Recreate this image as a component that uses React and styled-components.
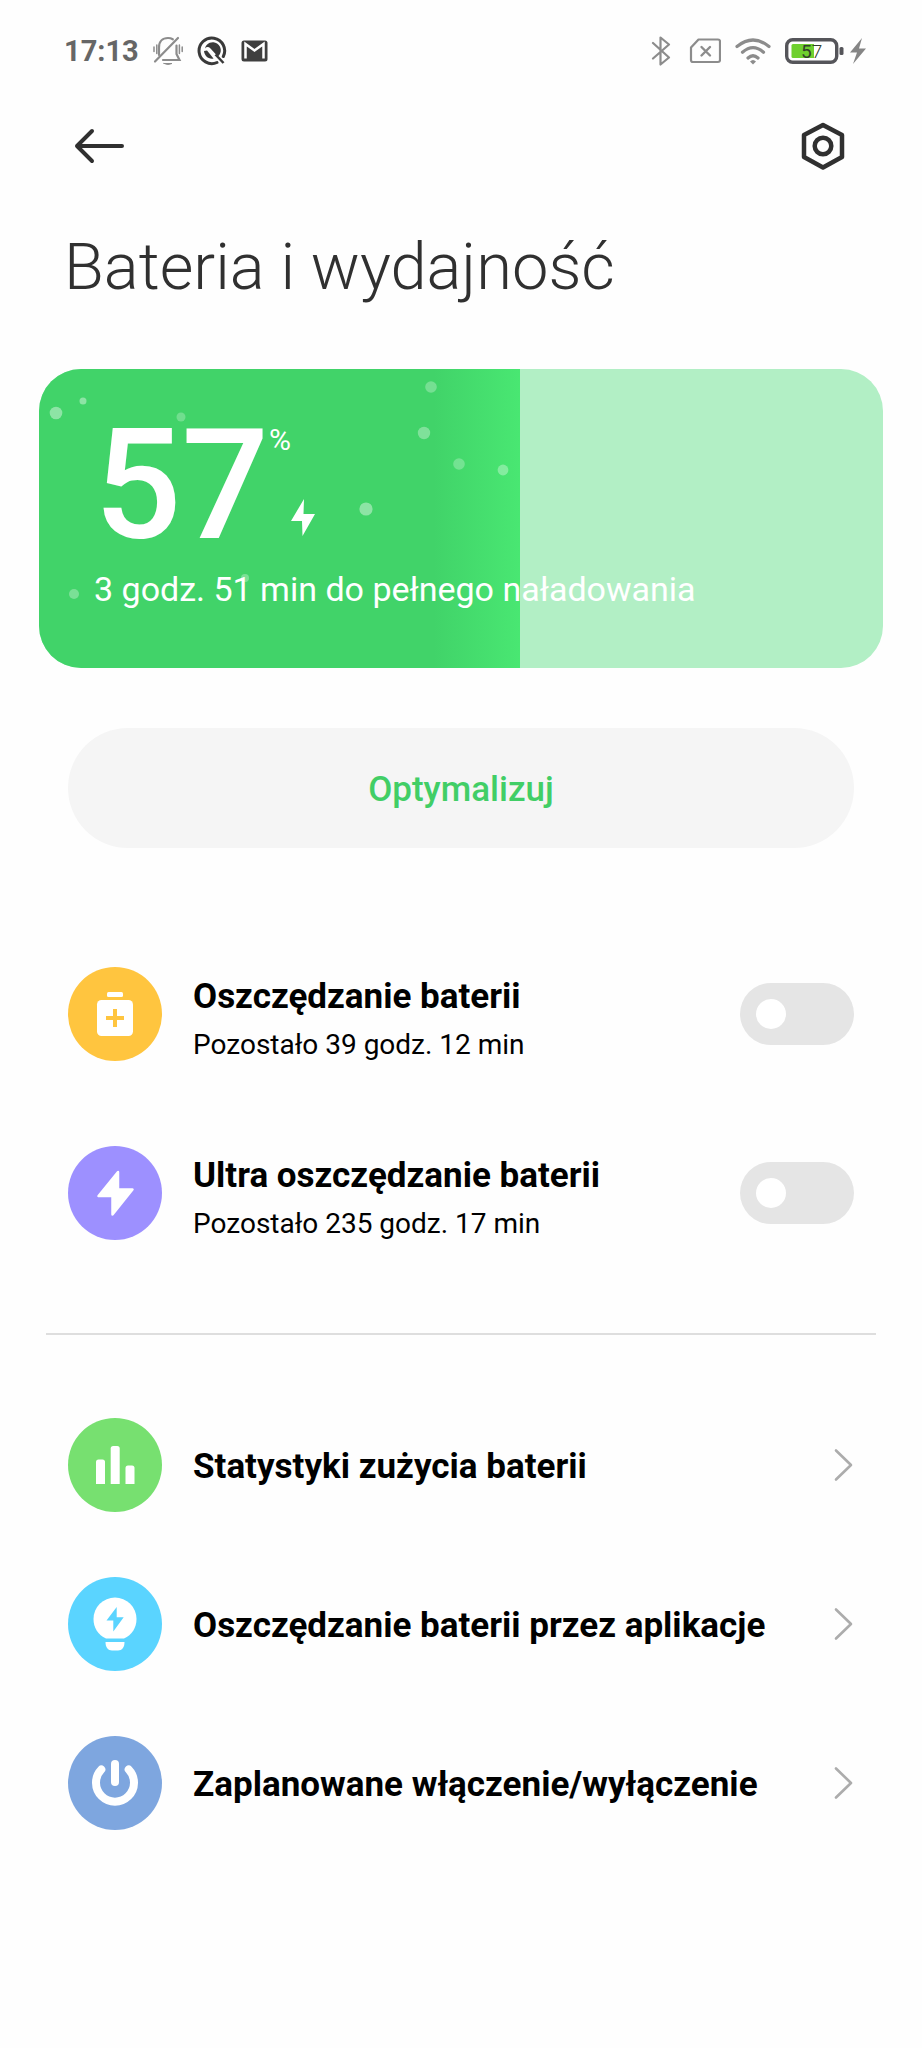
import React from 'react'
import styled, { createGlobalStyle } from 'styled-components'

const switches = [
    { id: 'saver', title: 'Oszczędzanie baterii', note: 'Pozostało 39 godz. 12 min', color: '#ffc53f', icon: <SaverIcon /> },
    { id: 'ultra', title: 'Ultra oszczędzanie baterii', note: 'Pozostało 235 godz. 17 min', color: '#9d90ff', icon: <UltraIcon /> },
]

const links = [
    { id: 'stats', title: 'Statystyki zużycia baterii', color: '#77e070', icon: <StatsIcon /> },
    { id: 'apps', title: 'Oszczędzanie baterii przez aplikacje', color: '#5ad4ff', icon: <BulbIcon /> },
    { id: 'schedule', title: 'Zaplanowane włączenie/wyłączenie', color: '#7ea6df', icon: <PowerIcon /> },
]

// x, y, radius, opacity
const bubbles = [
    [17, 44, 6.3, 0.4],
    [44, 32, 3.5, 0.4],
    [142, 48, 4.5, 0.25],
    [392, 18, 5.8, 0.28],
    [385, 64, 6.2, 0.33],
    [327, 140, 6.6, 0.4],
    [420, 95, 5.8, 0.26],
    [464, 101, 5.4, 0.33],
    [35, 225, 5, 0.3],
    [206, 209, 4, 0.3],
]

function App() {
    return (
        <Page>
            <GlobalStyle />
            <StatusBar>
                <StatusGroup>
                    <Clock>17:13</Clock>
                    <MutedIcon />
                    <SearchIcon />
                    <MailIcon />
                </StatusGroup>
                <StatusGroup>
                    <BluetoothIcon />
                    <SimIcon />
                    <WifiIcon />
                    <BatteryIcon />
                </StatusGroup>
            </StatusBar>
            <Header>
                <IconButton aria-label="Wstecz">
                    <svg width="50" height="36" viewBox="0 0 50 36" fill="none" stroke="#303030" strokeWidth="4" strokeLinecap="round" strokeLinejoin="round">
                        <path d="M48 18H3M18 3L3 18L18 33" />
                    </svg>
                </IconButton>
                <IconButton aria-label="Ustawienia">
                    <svg width="44" height="48" viewBox="0 0 44 48" fill="none" stroke="#303030" strokeWidth="4.500" strokeLinejoin="round">
                        <path d="M22 3L41 13V35L22 45.500L3 35V13Z" />
                        <circle cx="22" cy="24" r="8.300" />
                    </svg>
                </IconButton>
            </Header>
            <Title>Bateria i wydajność</Title>

            <Card>
                <Fill>
                    <svg width="481" height="299" viewBox="0 0 481 299">
                        {bubbles.map(([x, y, r, o]) => (
                            <circle key={`${x}-${y}`} cx={x} cy={y} r={r} fill="#fff" opacity={o} />
                        ))}
                    </svg>
                </Fill>
                <Level>
                    <Amount>57</Amount>
                    <Unit>%</Unit>
                    <Charging>
                        <svg width="24" height="38" viewBox="0 0 24 38">
                            <path d="M13 0L0 22H11L11.500 37L24 15H12.500Z" fill="#fff" />
                        </svg>
                    </Charging>
                </Level>
                <Remaining>3 godz. 51 min do pełnego naładowania</Remaining>
            </Card>

            <Optimize>Optymalizuj</Optimize>

            <SwitchList>
                {switches.map(s => (
                    <SwitchRow key={s.id} htmlFor={s.id}>
                        <Badge $color={s.color}>{s.icon}</Badge>
                        <Texts>
                            <RowTitle>{s.title}</RowTitle>
                            <Note>{s.note}</Note>
                        </Texts>
                        <Toggle id={s.id} type="checkbox" />
                    </SwitchRow>
                ))}
            </SwitchList>

            <Divider />

            <nav>
                {links.map(l => (
                    <LinkRow key={l.id} href={`#${l.id}`}>
                        <Badge $color={l.color}>{l.icon}</Badge>
                        <Texts>
                            <RowTitle>{l.title}</RowTitle>
                        </Texts>
                        <svg width="20" height="34" viewBox="0 0 20 34" fill="none" stroke="#acacac" strokeWidth="2.600" strokeLinecap="round" strokeLinejoin="round">
                            <path d="M2 2.500L17 17L2 31.500" />
                        </svg>
                    </LinkRow>
                ))}
            </nav>
        </Page>
    )
}

export default App

// status bar icons
function MutedIcon() {
    return (
        <svg width="30" height="30" viewBox="0 0 30 30" fill="none" stroke="#8c8c8c" strokeWidth="2.200" strokeLinecap="round">
            <path d="M6 19V11.500C6 5.500 9.500 2 15 2C17 2 18.500 2.500 19.800 3.300M23.500 9.500V18L26.500 24H10" />
            <path d="M2 25.500L25 2" />
            <path d="M11 27.500H19Q15 29.500 11 27.500Z" fill="#8c8c8c" strokeWidth="1" />
            <path d="M1 11V15.500M3.800 9V17.500M26.400 9V17.500M29.200 11V15.500" strokeWidth="1.500" />
        </svg>
    )
}

function SearchIcon() {
    return (
        <svg width="30" height="30" viewBox="0 0 30 30" fill="none">
            <path d="M20 26.500A12.800 12.800 0 1 1 26.300 20.500" stroke="#3a3a3a" strokeWidth="3" strokeLinecap="round" />
            <path d="M8 12.500A8 8 0 1 1 20.800 20.500L13.500 12.500C11.500 10.500 9.500 10.700 8 12.500Z" fill="#3a3a3a" />
            <path d="M7 15L10 14.500L16.500 22.500C11.500 23.500 7.500 20 7 15Z" fill="#3a3a3a" />
            <path d="M18.500 18.500L26.500 27" stroke="#3a3a3a" strokeWidth="2.500" />
        </svg>
    )
}

function MailIcon() {
    return (
        <svg width="27" height="22" viewBox="0 0 27 22" fill="none">
            <rect x="0.500" y="0.500" width="26" height="21" rx="2.500" fill="#3f3f3f" />
            <path d="M4.500 18.500V4L13.500 10.500L22.500 4V18.500" stroke="#fff" strokeWidth="2.500" />
        </svg>
    )
}

function BluetoothIcon() {
    return (
        <svg width="24" height="30" viewBox="0 0 24 30" fill="none" stroke="#8c8c8c" strokeWidth="2.200" strokeLinejoin="round" strokeLinecap="round">
            <path d="M2 7L18 21.500L9.500 28.500V1.500L18 8.500L2 22.500" />
        </svg>
    )
}

function SimIcon() {
    return (
        <svg width="32" height="26" viewBox="0 0 32 26" fill="none" stroke="#8c8c8c" strokeWidth="2.200" strokeLinejoin="round" strokeLinecap="round">
            <path d="M9.500 1.500H29Q31 1.500 31 3.500V22Q31 24 29 24H4Q2 24 2 22V9.500Z" />
            <path d="M12.500 9L21 17.500M21 9L12.500 17.500" strokeWidth="2.400" />
        </svg>
    )
}

function WifiIcon() {
    return (
        <svg width="36" height="27" viewBox="0 0 36 27" fill="none" stroke="#8c8c8c" strokeWidth="3.200" strokeLinecap="round">
            <path d="M2 8.500Q18 -4.500 34 8.500M7.500 14.300Q18 5 28.500 14.300M13 20Q18 15.500 23 20" />
            <path d="M15 23.500Q18 20.500 21 23.500L18 26.500Z" fill="#8c8c8c" stroke="none" />
        </svg>
    )
}

function BatteryIcon() {
    return (
        <svg width="82" height="28" viewBox="0 0 82 28">
            <rect x="1.700" y="2.700" width="50" height="22.600" rx="6" fill="#fff" stroke="#55555a" strokeWidth="3.400" />
            <path d="M8 7H29V21H8Q6.500 21 6.500 19.500V8.500Q6.500 7 8 7Z" fill="#6fd02f" />
            <BatteryText x="16" y="21">5<tspan fontWeight="300">7</tspan></BatteryText>
            <rect x="54.500" y="10" width="4" height="8" rx="1.500" fill="#55555a" />
            <path d="M77 1L65 15.500H72L68 27L81 11.500H74Z" fill="#858585" />
        </svg>
    )
}

// list icons
function SaverIcon() {
    return (
        <svg width="94" height="94" viewBox="0 0 94 94">
            <rect x="39" y="25" width="16" height="5" rx="1.500" fill="#fff" />
            <rect x="29" y="33" width="36" height="36" rx="4.500" fill="#fff" />
            <path d="M47 42V60M38 51H56" stroke="#ffc53f" strokeWidth="4" />
        </svg>
    )
}

function UltraIcon() {
    return (
        <svg width="94" height="94" viewBox="0 0 94 94">
            <path d="M50 26L30.500 50H44.500V68.500L64.500 43.500H50Z" fill="#fff" stroke="#fff" strokeWidth="2.500" strokeLinejoin="round" />
        </svg>
    )
}

function StatsIcon() {
    return (
        <svg width="94" height="94" viewBox="0 0 94 94" fill="#fff">
            <path d="M28 66V44Q28 41.500 30.500 41.500H34.500Q37 41.500 37 44V66Z" />
            <path d="M42.700 66V30.500Q42.700 28 45.200 28H49.200Q51.700 28 51.700 30.500V66Z" />
            <path d="M57.500 66V50Q57.500 47.500 60 47.500H64Q66.500 47.500 66.500 50V66Z" />
        </svg>
    )
}

function BulbIcon() {
    return (
        <svg width="94" height="94" viewBox="0 0 94 94" fill="#fff">
            <path d="M38 61.500C30 58 25.500 50.500 25.500 42A21.500 21.500 0 0 1 68.500 42C68.500 50.500 64 58 56 61.500Z" />
            <path d="M37.500 65H56.500C56.500 70.500 54 73.500 50 73.500H44C40 73.500 37.500 70.500 37.500 65Z" />
            <path d="M48.700 30L38.500 43.500H45.300V54.500L55.700 40.300H48.700Z" fill="#5ad4ff" />
        </svg>
    )
}

function PowerIcon() {
    return (
        <svg width="94" height="94" viewBox="0 0 94 94" fill="none" stroke="#fff" strokeWidth="8" strokeLinecap="round">
            <path d="M33.300 33.500A19 19 0 1 0 60.700 33.500" />
            <path d="M47 28V46" />
        </svg>
    )
}

const GlobalStyle = createGlobalStyle`
    * {
        box-sizing: border-box;
    }

    body {
        margin: 0;
        background: #fefefe;
        color: #000;
        font-family: Roboto, "Noto Sans", sans-serif;
    }
`

const Page = styled.main`
    padding-bottom: 120px;
`

// status bar
const StatusBar = styled.div`
    display: flex;
    justify-content: space-between;
    padding: 32px 55px 0 64px;
`

const StatusGroup = styled.div`
    display: flex;
    align-items: center;
    height: 38px;
    gap: 14px;
`

const Clock = styled.span`
    font-size: 29px;
    font-weight: 700;
    color: #666;
`

const BatteryText = styled.text`
    font-family: Roboto, sans-serif;
    font-size: 19px;
    fill: #33402c;
`

// header
const Header = styled.header`
    display: flex;
    justify-content: space-between;
    align-items: center;
    height: 72px;
    margin-top: 40px;
    padding: 0 67px 0 64px;
`

const IconButton = styled.button`
    display: flex;
    align-items: center;
    height: 72px;
    padding: 0 10px;
    border: 0;
    background: none;
    cursor: pointer;
`

const Title = styled.h1`
    margin: 45px 64px 0;
    font-size: 65px;
    font-weight: 300;
    line-height: 80px;
    color: #303030;
`

// battery card
const Card = styled.section`
    position: relative;
    height: 299px;
    margin: 62px 39px 0;
    padding: 51px 55px 0;
    border-radius: 42px;
    overflow: hidden;
    background: #b2efc5;
    color: #fff;
`

const Fill = styled.div`
    position: absolute;
    top: 0;
    bottom: 0;
    left: 0;
    width: 57%;
    background: linear-gradient(90deg, #41d369 82%, #49e772 100%);
`

const Level = styled.div`
    position: relative;
    display: flex;
    height: 132px;
`

const Amount = styled.strong`
    font-size: 154px;
    font-weight: 500;
    line-height: 132px;
`

const Unit = styled.span`
    font-size: 30px;
    line-height: 40px;
`

const Charging = styled.span`
    align-self: flex-end;
    height: 53px;
`

const Remaining = styled.p`
    position: relative;
    margin: 17px 0 0;
    font-size: 34px;
    line-height: 40px;
`

const Optimize = styled.button`
    display: block;
    width: calc(100% - 136px);
    height: 120px;
    margin: 60px 68px 0;
    padding: 2px 0 0;
    border: 0;
    border-radius: 60px;
    background: #f5f5f5;
    color: #41ce66;
    font-family: inherit;
    font-size: 35px;
    font-weight: 500;
    cursor: pointer;
`

// rows
const SwitchList = styled.div`
    margin-top: 76px;
`

const SwitchRow = styled.label`
    display: flex;
    align-items: center;
    height: 179px;
    padding: 0 68px;
    cursor: pointer;
`

const LinkRow = styled.a`
    display: flex;
    align-items: center;
    height: 159px;
    padding: 0 68px;
    color: inherit;
    text-decoration: none;
`

const Badge = styled.span`
    width: 94px;
    height: 94px;
    flex: none;
    border-radius: 50%;
    background: ${props => props.$color};
`

const Texts = styled.span`
    display: flex;
    flex-direction: column;
    flex: 1;
    margin-left: 31px;

    ${SwitchRow} & {
        padding-top: 10px;
    }
`

const RowTitle = styled.span`
    padding-top: 4px;
    font-size: 35px;
    font-weight: 700;
    line-height: 42px;
`

const Note = styled.span`
    padding-top: 6px;
    font-size: 28px;
    line-height: 42px;
`

const Toggle = styled.input`
    appearance: none;
    width: 114px;
    height: 62px;
    margin: 0;
    padding: 16px;
    border-radius: 31px;
    background: #e5e5e5;
    cursor: pointer;

    &::before {
        content: '';
        display: block;
        width: 30px;
        height: 30px;
        border-radius: 50%;
        background: #fff;
    }

    &:checked {
        background: #41d369;
    }

    &:checked::before {
        margin-left: auto;
    }
`

const Divider = styled.hr`
    height: 2px;
    margin: 51px 46px 50px;
    border: 0;
    background: #dedede;
`
